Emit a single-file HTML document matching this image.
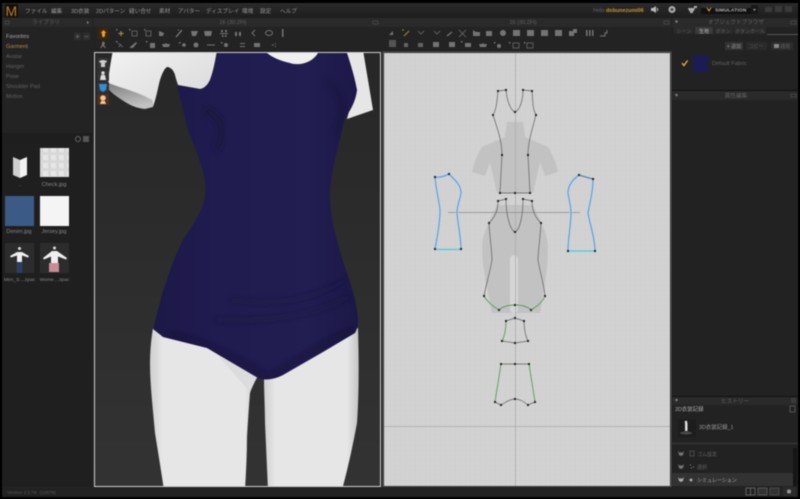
<!DOCTYPE html>
<html><head><meta charset="utf-8"><style>
html,body{margin:0;padding:0;background:#000;width:800px;height:499px;overflow:hidden}
svg{display:block;filter:blur(.45px)}
text{font-family:"Liberation Sans","Noto Sans CJK JP",sans-serif;font-size:5.6px;fill:#989898}
.d{fill:#626262}.c{text-anchor:middle}
.i{fill:#747474}.s{fill:none;stroke:#747474;stroke-width:1}
.p{fill:none;stroke:#5e5e5e;stroke-width:.7}
.g{fill:none;stroke:#5c9a5f;stroke-width:.9}
.b{fill:none;stroke:#4a8ac8;stroke-width:.8}
.h{fill:none;stroke:#b5d3ee;stroke-width:3;opacity:.65}
</style></head><body>
<svg width="800" height="499" viewBox="0 0 800 499" xmlns="http://www.w3.org/2000/svg">
<defs>
<pattern id="gr" width="5" height="5" patternUnits="userSpaceOnUse"><rect width="5" height="5" fill="#d2d2d2"/><path d="M0 0H5M0 0V5" stroke="#cacaca" stroke-width=".6"/></pattern>
<pattern id="ck" width="8" height="8" patternUnits="userSpaceOnUse"><rect width="8" height="8" fill="#e6e6e6"/><rect width="3" height="8" fill="#d6d6d6"/><rect width="8" height="3" fill="#d8d8d8"/></pattern>
<linearGradient id="vp" x1="0" y1="0" x2="0" y2="1"><stop offset="0" stop-color="#272727"/><stop offset="1" stop-color="#333"/></linearGradient>
<linearGradient id="bar" x1="0" y1="0" x2="0" y2="1"><stop offset="0" stop-color="#2b2b2b"/><stop offset="1" stop-color="#1d1d1d"/></linearGradient>
<linearGradient id="suit" x1="0" y1="0" x2="1" y2="0"><stop offset="0" stop-color="#1c1846"/><stop offset=".3" stop-color="#211c50"/><stop offset=".75" stop-color="#231e52"/><stop offset="1" stop-color="#1c1846"/></linearGradient>
<linearGradient id="leg" x1="0" y1="0" x2="1" y2="0"><stop offset="0" stop-color="#cfcfcf"/><stop offset=".12" stop-color="#e6e6e6"/><stop offset=".88" stop-color="#e6e6e6"/><stop offset="1" stop-color="#c4c4c4"/></linearGradient>
<linearGradient id="arm" x1="0" y1="0" x2="1" y2="1"><stop offset="0" stop-color="#f2f2f2"/><stop offset="1" stop-color="#d8d8d8"/></linearGradient>
<linearGradient id="cap" x1="0" y1="0" x2=".3" y2="1"><stop offset="0" stop-color="#7f7f7f"/><stop offset="1" stop-color="#c2c2c2"/></linearGradient>
<filter id="bl" x="-30%" y="-30%" width="160%" height="160%"><feGaussianBlur stdDeviation="3"/></filter>
<clipPath id="vc"><rect x="95" y="53" width="285" height="433"/></clipPath>
<clipPath id="sc"><path d="M217 53C214 68 212 75 210 80C207 86 204 89 200 89L177 85C180 100 184 112 187 127C193 145 203 165 205 183C206 195 204 203 202 207C197 220 189 230 183 240C175 255 170 270 167 280C163 290 161 297 160 303C157 312 155 322 153 329L163 337L207 348L258 378C265 381 275 379 283 375L323 352L355 333C358 328 358 322 358 317C357 305 352 287 347 273C343 262 340 251 337 240C333 225 330 210 330 193C331 175 335 160 338 147L345 118C351 110 356 100 357 90C355 78 350 62 347 53H318C315 58 311 62 307 63C301 65 295 65 290 63C280 61 272 57 267 53Z"/></clipPath>
</defs>

<rect width="800" height="499" fill="#000"/>
<rect x="2" y="3" width="796" height="494" fill="#222"/>
<rect x="2" y="3" width="796" height="15" fill="url(#bar)"/>
<rect x="5" y="4" width="13" height="13" fill="#181008"/>
<text x="5.500" y="16" style="font-size:14px;fill:#b07f38">M</text>
<text x="25" y="13">ファイル</text><text x="51" y="13">編集</text><text x="71" y="13">3D衣装</text><text x="96" y="13">2Dパターン</text><text x="129" y="13">縫い合せ</text><text x="159" y="13">素材</text><text x="178" y="13">アバター</text><text x="206" y="13">ディスプレイ</text><text x="242" y="13">環境</text><text x="260" y="13">設定</text><text x="280" y="13">ヘルプ</text>
<text x="593" y="12" class="d" style="font-size:5px">Hello</text>
<text x="606" y="12" style="fill:#c8942f;font-weight:bold;font-size:5.400px">dobunezumi06</text>
<path d="M651 8h2l3-2v7l-3-2h-2z" fill="#bbb"/><path d="M657 8q1.500 1.500 0 3" stroke="#bbb" fill="none"/>
<circle cx="672" cy="9.500" r="3.500" fill="#aaa"/><circle cx="672" cy="9.500" r="1.300" fill="#333"/>
<path d="M688 8h7l-1 3h-1v2h-3v-2h-1z" fill="#aaa"/><rect x="694" y="6" width="3" height="2" fill="#aaa"/>
<rect x="701" y="3" width="57" height="11" fill="#2e2e2e"/><rect x="701" y="8" width="57" height="6" fill="#111"/>
<path d="M706 7l3 5 3-5-1.500 1-1.500 1.500-1.500-1.500z" fill="#d09a35"/>
<text x="715" y="11.500" style="font-size:4.800px;fill:#bbb;font-weight:bold;letter-spacing:.2px">SIMULATION</text>
<rect x="751" y="5" width="7" height="9" fill="#181818"/><path d="M753 9h3l-1.500 2z" fill="#999"/>
<rect x="765" y="7" width="7" height="5" fill="#3a3a3a"/><rect x="775" y="6" width="7" height="6" fill="#3a3a3a"/><rect x="785" y="6" width="7" height="6" fill="#3a3a3a"/>

<rect x="2" y="18" width="90" height="9" fill="#2a2a2a"/>
<text x="46" y="24" class="c d">ライブラリ</text>
<rect x="5" y="21" width="4" height="3" fill="none" stroke="#555" stroke-width=".6"/>
<path d="M87 21l2 1.500-2 1.500z" fill="#888"/>
<rect x="2" y="27" width="90" height="106" fill="#232323"/>
<text x="6" y="38" style="fill:#aaa">Favorites</text>
<rect x="74" y="33" width="7" height="7" fill="#2f2f2f"/><rect x="83" y="33" width="7" height="7" fill="#2f2f2f"/>
<path d="M75.500 36.500h4M77.500 34.500v4M84.500 36.500h4" stroke="#666" stroke-width=".8"/>
<text x="6" y="48" style="fill:#b88e40">Garment</text>
<text x="6" y="58" class="d">Avatar</text><text x="6" y="68" class="d">Hanger</text><text x="6" y="78" class="d">Pose</text><text x="6" y="88" class="d">Shoulder Pad</text><text x="6" y="98" class="d">Motion</text>
<rect x="2" y="133" width="90" height="11" fill="#1e1e1e"/>
<circle cx="78" cy="139" r="2.500" fill="none" stroke="#666"/><rect x="83" y="136" width="6" height="6" fill="#555"/>
<rect x="2" y="144" width="90" height="343" fill="#1f1f1f"/>
<path d="M13 157l7 3v18l-7-3z" fill="#cfcfcf"/><path d="M20 160l7-3v18l-7 3z" fill="#f2f2f2"/>
<text x="20" y="186" class="c d">..</text>
<rect x="40" y="148" width="29" height="29" fill="url(#ck)"/><text x="54" y="186" class="c" style="fill:#888">Check.jpg</text>
<rect x="5" y="196" width="29" height="30" fill="#3c5a86"/><text x="19" y="233" class="c" style="fill:#888">Denim.jpg</text>
<rect x="40" y="196" width="29" height="30" fill="#f4f4f4"/><text x="54" y="233" class="c" style="fill:#888">Jersey.jpg</text>
<rect x="5" y="243" width="29" height="30" fill="#2c2c2c"/>
<path d="M10 256l7-4h5l7 4-1 1.500-6-2v7h-5v-7l-6 2z" fill="#eee"/><rect x="16.500" y="262" width="6" height="11" fill="#2c3e62"/><circle cx="19.500" cy="248.500" r="1.500" fill="#ddd"/>
<text x="19.500" y="281" class="c" style="font-size:4.900px;fill:#888">Men_S....zpac</text>
<rect x="40" y="243" width="29" height="30" fill="#2c2c2c"/>
<path d="M43 258l9-7h5l10 7-1 1.500-8-3v7h-7v-7l-7 3z" fill="#eee"/><rect x="49" y="263" width="10" height="9" fill="#c88c94"/><circle cx="54.500" cy="248" r="1.500" fill="#ddd"/>
<text x="54.500" y="281" class="c" style="font-size:4.900px;fill:#888">Wome....zpac</text>

<rect x="93" y="18" width="290" height="9" fill="#2a2a2a"/>
<text x="233" y="24" class="c d">16 (30.2Ft)</text>
<rect x="373" y="21" width="5" height="3" fill="none" stroke="#555" stroke-width=".6"/>
<rect x="93" y="27" width="290" height="25" fill="#232323"/>
<rect x="98" y="28" width="11" height="11" fill="#3a2510"/>
<path d="M103.500 30l3 3h-1.500v3l-1.500 1.500-1.500-1.500v-3h-1.500z" fill="#e8a030"/>
<g class="i">
<path d="M121 31v5M118.500 33.500h5" stroke="#a08a50" stroke-width="1.200"/><rect x="116" y="29" width="1.500" height="1.500"/>
<rect x="132" y="31" width="5" height="5" class="s" style="stroke-width:.7"/><rect x="129" y="29" width="1.500" height="1.500"/>
<rect x="146" y="31" width="5" height="5" class="s" style="stroke-width:.7"/><rect x="144" y="29" width="1.500" height="1.500"/>
<path d="M159 31l5 2-1 3h-4z"/>
<path d="M176 37l6-7M178 30h1" stroke="#8d8d8d" fill="none"/>
<path d="M191 31h7l-2 5h-4z"/><path d="M204 31h8l-1 5h-6z"/>
<path d="M221 30h2v2h-2zM225 30h2v2h-2zM220 33h8v1h-8zM222 35h1.500v2h-1.500zM225 35h1.500v2h-1.500z"/>
<rect x="235" y="32" width="2" height="4"/><rect x="239" y="32" width="2" height="4"/>
<path d="M255 30l-3 3 3 3" class="s"/><ellipse cx="269" cy="33" rx="3.500" ry="2.500" class="s"/>
<rect x="282" y="29" width="1.500" height="8"/>
<path d="M103 41l2 2-1 2 2 3h-1l-2-2-2 2h-1l2-3v-2z"/>
<path d="M118 43l5 4M121 44l-2 3" class="s" style="stroke-width:.8"/><rect x="116" y="41" width="1.500" height="1.500"/>
<path d="M130 47l6-5 1 1-4 5h-3z"/>
<rect x="150" y="43" width="5" height="5"/><rect x="146" y="41" width="1.500" height="1.500"/>
<path d="M162 44h3l1-1 1 1h3l-1 3h-6z"/>
<circle cx="184" cy="45" r="1.800"/><rect x="179" y="42" width="1.500" height="1.500"/>
<circle cx="196" cy="45" r="2.500"/><rect x="207" y="44.500" width="8" height="1"/>
<circle cx="226" cy="45" r="2"/><rect x="221" y="42" width="1.500" height="1.500"/>
<path d="M240 43h5v1h-5zM240 46h5v1h-5z"/><rect x="254" y="43" width="6" height="4"/>
<path d="M272 44.500h2v1h-2zM275 43h1v1h-1zM275 46h1v1h-1z"/>
</g>

<rect x="94.500" y="52.500" width="286" height="434" fill="url(#vp)" stroke="#cfcfcf"/>
<g clip-path="url(#vc)">
<path d="M113 50C111 60 109 72 108 83L152 100L153 107C157 95 158 87 160 80C162 74 164 69 167 67C171 67 174 71 175 75C176 79 177 82 178 85L200 89C205 88 208 84 210 80C213 72 215 62 217 50Z" fill="url(#arm)"/>
<path d="M108 83C122 88 140 93 152 100L153 107L145 109C135 108 128 104 122 100C116 96 110 92 108 88Z" fill="url(#cap)"/>
<path d="M262 50L268 54C275 60 285 64 295 64C305 65 315 60 320 50Z" fill="#f0f0f0"/>
<path d="M344 50L363 50L373 110L347 119L352 100L357 90Z" fill="#e6e6e6"/>
<path d="M153 328C151 340 150 352 150 363C150 385 153 410 155 433C158 452 161 470 164 490H245C246 472 247 455 247 437C248 420 249 405 250 393C252 386 255 381 258 376L210 345Z" fill="url(#leg)"/>
<path d="M264 378C264 392 265 408 265 423C266 445 267 468 268 490H342C348 468 353 445 357 423C359 395 359 360 358 328L300 360Z" fill="url(#leg)"/>
<path d="M215 352L257 377L250 392L236 376Z" fill="#dcdcdc"/>
<path d="M217 53C214 68 212 75 210 80C207 86 204 89 200 89L177 85C180 100 184 112 187 127C193 145 203 165 205 183C206 195 204 203 202 207C197 220 189 230 183 240C175 255 170 270 167 280C163 290 161 297 160 303C157 312 155 322 153 329L163 337L207 348L258 378C265 381 275 379 283 375L323 352L355 333C358 328 358 322 358 317C357 305 352 287 347 273C343 262 340 251 337 240C333 225 330 210 330 193C331 175 335 160 338 147L345 118C351 110 356 100 357 90C355 78 350 62 347 53H318C315 58 311 62 307 63C301 65 295 65 290 63C280 61 272 57 267 53Z" fill="url(#suit)"/>
<g clip-path="url(#sc)" opacity=".6">
<path d="M205 110C222 118 226 130 216 150" stroke="#171338" stroke-width="7" fill="none" filter="url(#bl)"/>
<path d="M325 80C342 92 348 110 336 135" stroke="#171338" stroke-width="6" fill="none" filter="url(#bl)" opacity=".6"/>
<path d="M215 320C260 322 310 318 350 296" stroke="#15123a" stroke-width="3" fill="none" filter="url(#bl)"/>
<path d="M230 300C270 305 310 302 345 280" stroke="#15123a" stroke-width="3" fill="none" filter="url(#bl)"/>
<path d="M170 335C210 342 250 365 268 378C290 365 320 345 352 330" stroke="#130f33" stroke-width="5" fill="none" filter="url(#bl)"/>
</g>
</g>
<rect x="97" y="58" width="12" height="11" fill="#333"/><path d="M99 61l3-1h2l3 1-1 2-1-.5V67h-4v-4.500l-1 .5z" fill="#ccc"/>
<rect x="97" y="70" width="12" height="11" fill="#333"/><circle cx="103" cy="73" r="1.700" fill="#ddd"/><path d="M100 80l1-5h4l1 5z" fill="#ddd"/>
<rect x="97" y="82" width="12" height="11" fill="#333"/><path d="M99 84h8l-1 6-3 2-3-2z" fill="#2f8fd8"/>
<rect x="97" y="94" width="12" height="11" fill="#4a3020"/><circle cx="103" cy="98" r="2.800" fill="#f2c490"/><path d="M100 104l1-3h4l1 3z" fill="#f2c490"/>

<rect x="383" y="18" width="288" height="9" fill="#2a2a2a"/>
<text x="523" y="24" class="c d">16 (30.2Ft)</text>
<rect x="664" y="21" width="5" height="3" fill="none" stroke="#555" stroke-width=".6"/>
<rect x="383" y="27" width="288" height="25" fill="#232323"/>
<g class="i">
<path d="M389 35l4-4v4z"/><path d="M404 36l5-5" stroke="#a08a50" fill="none"/><circle cx="403" cy="30" r=".8" fill="#a08a50"/>
<path d="M418 31l3 3 3-3" class="s" style="stroke-width:.7"/><path d="M434 31l3 3 3-3" class="s" style="stroke-width:.7"/>
<path d="M447 36l5-4" stroke="#8d8d8d" fill="none"/><path d="M459 30l7 7M466 30l-7 7" class="s" style="stroke-width:.7"/>
<path d="M473 30l3 2h4v4h-7z"/><rect x="486" y="31" width="6" height="5"/><circle cx="503" cy="33" r="3"/>
<rect x="513" y="30" width="7" height="6"/><rect x="527" y="30" width="7" height="6"/><rect x="541" y="30" width="7" height="6"/><rect x="555" y="30" width="7" height="6"/>
<rect x="569" y="31" width="5" height="5"/><rect x="573" y="29" width="4" height="4"/>
<rect x="586" y="30" width="1.500" height="6"/><rect x="589" y="30" width="1.500" height="6"/><rect x="592" y="30" width="1.500" height="6"/>
<path d="M600 36h5v-3h2v-3" class="s"/>
<path d="M404 43h4v4h-4zM418 43h5v4h-5z" opacity=".8"/><rect x="433" y="42" width="6" height="5"/>
<rect x="449" y="42" width="6" height="5"/><rect x="465" y="43" width="6" height="4"/><rect x="461" y="41" width="1.500" height="1.500"/>
<path d="M479 44h3l1-1 1 1h3l-1 3h-6z"/><circle cx="499" cy="46" r="2"/><rect x="494" y="42" width="1.500" height="1.500"/>
<rect x="513" y="43" width="6" height="5" class="s" style="stroke-width:.7"/><rect x="527" y="43" width="6" height="5" class="s" style="stroke-width:.7"/>
<rect x="509" y="42" width="1.500" height="1.500"/><rect x="524" y="42" width="1.500" height="1.500"/>
</g>
<rect x="389" y="40" width="7" height="7" class="i" opacity=".6"/>

<rect x="384" y="53" width="286" height="433" fill="url(#gr)"/>
<rect x="383" y="52" width="288" height="435" fill="none" stroke="#555"/>
<path d="M507 122H523L525 137L548 147C553 155 557 165 558 172L545 176L540 162L533 193H497L490 162L485 176L472 172C473 165 477 155 482 147L505 137Z" fill="#c2c2c2"/>
<path d="M497 205H533C540 220 548 235 548 247C548 270 543 295 540 313H492C489 295 482 270 482 247C482 235 490 220 497 205Z" fill="#c2c2c2"/>
<rect x="510" y="255" width="8" height="58" rx="4" fill="#d6d6d6"/>
<path d="M515.500 53V486" stroke="#adadad" stroke-width=".8"/>
<path d="M384 426.500H670" stroke="#a8a8a8" stroke-width=".8"/>
<path d="M448 212.500H580" stroke="#8b8b95" stroke-width=".8"/>
<path class="h" d="M435 177C440 178 445 176 449 174C455 180 461 185 461 193C460 200 457 205 457 213C458 225 461 238 461 249H435C437 238 440 225 440 210C439 200 436 190 435 177Z"/>
<path class="b" d="M461 249C461 238 458 225 457 213C457 205 460 200 461 193C461 185 455 180 449 174C445 176 440 178 435 177C436 190 439 200 440 210C440 225 437 238 435 249"/>
<path d="M435 249.500H461" stroke="#4fc6c0" stroke-width="1"/>
<path class="h" d="M579 175C572 180 568 186 568 193C569 200 571 206 571 213C571 225 568 238 568 251H595C595 238 590 225 588 213C589 205 593 195 593 179Z"/>
<path class="b" d="M568 251C568 238 571 225 571 213C571 206 569 200 568 193C568 186 572 180 579 175C584 177 589 178 593 179C593 195 589 205 588 213C590 225 595 238 595 251"/>
<path d="M568 251H595" stroke="#4fc6c0" stroke-width="1"/>
<path d="M579 175L593 179" stroke="#666" stroke-width=".7"/>
<path class="p" d="M498 91L506 90M523 90L532 91M506 90C507 100 510 110 515 112C520 110 523 100 523 90M498 91C497 100 497 108 493 115C498 130 502 142 502 155L500 193H530L528 155C528 142 532 130 536 115C532 108 533 100 532 91"/>
<path class="p" d="M498 201L506 199M523 199L532 201M506 199C506 215 510 230 515 232C520 230 523 215 523 199M498 201C498 212 494 218 489 223C490 240 492 252 492 260C490 272 486 285 484 296M532 201C532 212 536 218 541 223C540 240 538 252 538 260C540 272 544 285 545 296"/>
<path class="g" d="M484 296C488 303 494 307 499 310C503 306 509 305 515 305C521 305 527 306 531 310C536 307 542 303 545 296"/>
<path class="p" d="M506 321L515 318L524 321M524 321C524 330 526 337 528 341L515 343L502 341"/>
<path class="g" d="M506 321C506 330 504 337 502 341"/>
<path class="p" d="M501 364H529M495 402L501 405C506 402 510 399 515 399C520 399 524 402 528 405L535 402"/>
<path class="g" d="M501 364L495 402M529 364L535 402"/>
<g fill="#222">
<rect x="497" y="90" width="2" height="2"/><rect x="505" y="89" width="2" height="2"/><rect x="522" y="89" width="2" height="2"/><rect x="531" y="90" width="2" height="2"/><rect x="514" y="111" width="2" height="2"/><rect x="492" y="114" width="2" height="2"/><rect x="535" y="114" width="2" height="2"/><rect x="501" y="154" width="2" height="2"/><rect x="527" y="154" width="2" height="2"/><rect x="499" y="192" width="2" height="2"/><rect x="514" y="192" width="2" height="2"/><rect x="529" y="192" width="2" height="2"/>
<rect x="497" y="200" width="2" height="2"/><rect x="505" y="198" width="2" height="2"/><rect x="522" y="198" width="2" height="2"/><rect x="531" y="200" width="2" height="2"/><rect x="514" y="231" width="2" height="2"/><rect x="488" y="222" width="2" height="2"/><rect x="540" y="222" width="2" height="2"/><rect x="483" y="295" width="2" height="2"/><rect x="544" y="295" width="2" height="2"/><rect x="498" y="309" width="2" height="2"/><rect x="530" y="309" width="2" height="2"/><rect x="514" y="304" width="2" height="2"/>
<rect x="505" y="320" width="2" height="2"/><rect x="514" y="317" width="2" height="2"/><rect x="523" y="320" width="2" height="2"/><rect x="501" y="340" width="2" height="2"/><rect x="527" y="340" width="2" height="2"/><rect x="514" y="342" width="2" height="2"/>
<rect x="500" y="363" width="2" height="2"/><rect x="514" y="363" width="2" height="2"/><rect x="528" y="363" width="2" height="2"/><rect x="494" y="401" width="2" height="2"/><rect x="500" y="404" width="2" height="2"/><rect x="514" y="398" width="2" height="2"/><rect x="527" y="404" width="2" height="2"/><rect x="534" y="401" width="2" height="2"/>
<rect x="434" y="176" width="2" height="2"/><rect x="448" y="173" width="2" height="2"/><rect x="434" y="248" width="2" height="2"/><rect x="460" y="248" width="2" height="2"/>
<rect x="578" y="174" width="2" height="2"/><rect x="592" y="178" width="2" height="2"/><rect x="567" y="250" width="2" height="2"/><rect x="594" y="250" width="2" height="2"/>
</g>

<rect x="672" y="18" width="126" height="73" fill="#222"/>
<rect x="672" y="18" width="126" height="9" fill="#2a2a2a"/>
<text x="736" y="24" class="c d">オブジェクトブラウザ</text>
<path d="M675 21.500h3M676.500 20v3" stroke="#999" stroke-width=".7"/>
<rect x="791" y="21" width="5" height="3" fill="none" stroke="#555" stroke-width=".6"/>
<rect x="674" y="27" width="20" height="7" fill="#2a2a2a"/><text x="684" y="33" class="c d" style="font-size:5px">シーン</text>
<rect x="695" y="27" width="18" height="7" fill="#3a3a3a"/><text x="704" y="33" class="c" style="font-size:5px;fill:#bbb">生地</text>
<rect x="714" y="27" width="19" height="7" fill="#2a2a2a"/><text x="723" y="33" class="c d" style="font-size:5px">ボタン</text>
<rect x="734" y="27" width="32" height="7" fill="#2a2a2a"/><text x="750" y="33" class="c d" style="font-size:5px">ボタンホール</text>
<path d="M767 34.500H798" stroke="#555"/>
<rect x="725" y="42" width="18" height="8" fill="#333"/><text x="734" y="48" class="c" style="font-size:5px">+ 追加</text>
<rect x="746" y="42" width="21" height="8" fill="#2a2a2a"/><text x="756" y="48" class="c" style="font-size:5px;fill:#555">コピー</text>
<rect x="771" y="42" width="22" height="8" fill="#2c2c2c"/><text x="785" y="48" class="c d" style="font-size:5px">適用</text><rect x="774" y="44" width="5" height="4" fill="#888"/>
<path d="M682 63l2 2.500 3.500-5" stroke="#e6b445" stroke-width="1.300" fill="none"/>
<rect x="693" y="55" width="15" height="17" fill="#1e1a52"/>
<text x="712" y="65" class="d">Default Fabric</text>
<rect x="672" y="90" width="126" height="1" fill="#111"/>
<rect x="672" y="91" width="126" height="9" fill="#2a2a2a"/>
<text x="736" y="97.500" class="c d">属性編集</text>
<path d="M675 95h3M676.500 93.500v3" stroke="#999" stroke-width=".7"/>
<rect x="791" y="94" width="5" height="3" fill="none" stroke="#555" stroke-width=".6"/>
<rect x="672" y="100" width="126" height="296" fill="#222"/>
<rect x="672" y="396" width="126" height="1" fill="#111"/>
<rect x="672" y="397" width="126" height="8" fill="#2a2a2a"/>
<text x="735" y="403" class="c d">ヒストリー</text>
<path d="M675 400h3M676.500 398.500v3" stroke="#999" stroke-width=".7"/>
<rect x="791" y="398" width="5" height="5" fill="#3a3a3a"/>
<text x="675" y="411" style="font-size:5.400px;fill:#aaa">3D衣装記録</text>
<rect x="790" y="406" width="5" height="6" fill="none" stroke="#666" stroke-width=".7"/>
<rect x="678" y="419" width="18" height="18" fill="#1d1d1d"/><rect x="685" y="423" width="2.500" height="8" fill="#ddd"/><circle cx="686" cy="422" r="1.300" fill="#ddd"/><ellipse cx="686" cy="433" rx="6" ry="1.500" fill="#4a4a4a"/>
<text x="699" y="429" style="font-size:5.400px;fill:#999">3D衣装記録_1</text>
<path d="M672 443.500H798" stroke="#3c3c3c"/>
<path d="M678 451l2 2 1-1 1 1 2-2-1 4-2 1-2-1z" fill="#777"/><rect x="690" y="451" width="4" height="5" fill="none" stroke="#666" stroke-width=".6"/><text x="697" y="456" class="d" style="font-size:5px">ゴム設定</text>
<path d="M678 464l2 2 1-1 1 1 2-2-1 4-2 1-2-1z" fill="#777"/><path d="M690 465h1M693 467h1M691 468h1" stroke="#888"/><text x="697" y="469" class="d" style="font-size:5px">選択</text>
<rect x="672" y="473" width="123" height="13" fill="#323232"/>
<path d="M678 477l2 2 1-1 1 1 2-2-1 4-2 1-2-1z" fill="#aaa"/><circle cx="691" cy="480" r="1.500" fill="#aaa"/><text x="697" y="482" style="font-size:5px;fill:#aaa">シミュレーション</text>
<rect x="793" y="448" width="4" height="38" fill="#151515"/>
<rect x="2" y="487" width="796" height="10" fill="#222"/>
<text x="7" y="494" style="font-size:4.600px;fill:#555">Version 2.3.78</text><text x="40" y="494" style="font-size:4.600px;fill:#555">(10578)</text>
<rect x="746" y="488" width="9" height="7" fill="none" stroke="#777" stroke-width=".7"/><path d="M750.500 488v7" stroke="#777" stroke-width=".7"/>
<rect x="758" y="488" width="9" height="7" fill="#333" stroke="#666" stroke-width=".7"/><rect x="770" y="488" width="9" height="7" fill="#333" stroke="#555" stroke-width=".7"/>
<rect x="783" y="487" width="13" height="9" fill="#2c2c2c"/><circle cx="789" cy="491.500" r="2" fill="#999"/>
</svg>
</body></html>
